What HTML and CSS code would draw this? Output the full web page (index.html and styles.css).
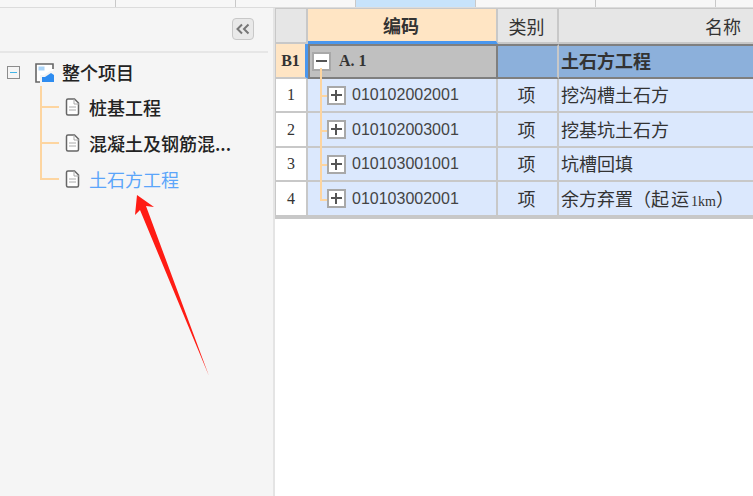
FILE: index.html
```html
<!DOCTYPE html>
<html lang="zh">
<head>
<meta charset="utf-8">
<title>土石方工程</title>
<link rel="stylesheet" href="styles.css">
</head>
<body>
<div class="tabs">
  <div class="tab"></div><div class="tab"></div>
  <div class="tab tab-active"></div>
  <div class="tab"></div><div class="tab"></div><div class="tab tab-last"></div>
</div>
<div class="main">
  <aside class="side">
    <div class="side-top"><button class="collapse" aria-label="collapse"><svg width="16" height="12" viewBox="0 0 16 12"><path d="M7 1.500 2.500 6 7 10.500M13.500 1.500 9 6l4.500 4.500" fill="none" stroke="#777" stroke-width="2"/></svg></button></div>
    <div class="tree">
      <div class="root">
        <span class="minus"></span>
        <svg class="root-icon" width="20" height="20" viewBox="0 0 20 20"><path d="M1 1h17v7l-3-.1L9 12H5v7H1z" fill="#fff"/><path d="M18 6V1H1v18h4" fill="none" stroke="#666" stroke-width="1.6"/><path d="M3.500 3.500h6v4h-6z" fill="#a9d3f7"/><path d="M7 19v-5h3l6-4 3 2v7z" fill="#2e8cf0"/></svg>
        <span class="root-label">整个项目</span>
      </div>
      <ul class="children">
        <li class="node"><svg class="doc" width="15" height="18" viewBox="0 0 15 18"><use href="#doc"/></svg><span class="node-label">桩基工程</span></li>
        <li class="node"><svg class="doc" width="15" height="18" viewBox="0 0 15 18"><use href="#doc"/></svg><span class="node-label">混凝土及钢筋混...</span></li>
        <li class="node"><svg class="doc" width="15" height="18" viewBox="0 0 15 18"><use href="#doc"/></svg><span class="node-label node-active">土石方工程</span></li>
      </ul>
    </div>
    <svg class="arrow" width="80" height="190" viewBox="0 0 80 190"><path d="M7 5 24 17l-8-1 63 170L10 20l-5 5z" fill="#ff1c14"/></svg>
  </aside>
  <section class="sheet">
    <div class="grid">
      <div class="c corner"></div>
      <div class="c head head-code">编码</div>
      <div class="c head head-type">类别</div>
      <div class="c head head-name">名称</div>

      <div class="c rowno rowno-b">B1</div>
      <div class="c code-b"><span class="box"><i class="h"></i></span><span class="a1">A. 1</span></div>
      <div class="c blue"></div>
      <div class="c blue blue-name">土石方工程</div>

      <div class="c rowno">1</div>
      <div class="c code"><span class="stem"></span><span class="box"><i class="h"></i><i class="v"></i></span><span class="num">010102002001</span></div>
      <div class="c type">项</div>
      <div class="c name">挖沟槽土石方</div>

      <div class="c rowno">2</div>
      <div class="c code"><span class="stem"></span><span class="box"><i class="h"></i><i class="v"></i></span><span class="num">010102003001</span></div>
      <div class="c type">项</div>
      <div class="c name">挖基坑土石方</div>

      <div class="c rowno">3</div>
      <div class="c code"><span class="stem"></span><span class="box"><i class="h"></i><i class="v"></i></span><span class="num">010103001001</span></div>
      <div class="c type">项</div>
      <div class="c name">坑槽回填</div>

      <div class="c rowno">4</div>
      <div class="c code code-last"><span class="stem"></span><span class="box"><i class="h"></i><i class="v"></i></span><span class="num">010103002001</span></div>
      <div class="c type">项</div>
      <div class="c name"><span>余方弃置（<span class="wide">起运</span><span class="km">1km</span>）</span></div>
    </div>
  </section>
</div>
<svg width="0" height="0" class="defs"><symbol id="doc" viewBox="0 0 15 18"><path d="M1.500 2.500q0-1.500 1.500-1.500h6.500l4 4v10.500q0 1.500-1.500 1.500H3q-1.500 0-1.500-1.500z" fill="#fff" stroke="#666" stroke-width="1.500"/><path d="M9 1v5h5M4 9h7M4 12h7" fill="none" stroke="#aaa"/></symbol></svg>
</body>
</html>
```
FILE: styles.css
```css
* { box-sizing: border-box; }
html, body { margin: 0; height: 100%; }
body {
  width: 753px; height: 496px; overflow: hidden; background: #fff;
  font-family: "Noto Sans CJK SC", "Liberation Sans", sans-serif;
  display: flex; flex-direction: column;
}
.defs { position: absolute; }
.tabs { height: 7px; display: flex; background: #f7f7f7; padding-left: 115px; flex: none; overflow: hidden; }
.tab { width: 120px; flex: none; border-left: 1px solid #c9c9c9; }
.tab-last { width: 38px; }
.tab-active { background: #c7e3fb; }
.main { flex: 1; display: flex; min-height: 0; border-top: 1px solid #dcdcdc; }
.side { width: 275px; flex: none; background: #f5f5f5; border-right: 2px solid #e4e4e4; position: relative; }
.side-top { height: 45px; border-bottom: 2px solid #e6e6e6; margin-right: 5px; padding: 10px 14px 0 0; display: flex; justify-content: flex-end; align-items: flex-start; }
.collapse { width: 22px; height: 22px; padding: 0; border: 1px solid #c8c8c8; border-radius: 4px; background: #e9e9e9; display: flex; align-items: center; justify-content: center; }
.tree { padding-top: 6px; color: #222; font-size: 18px; }
.root { display: flex; align-items: center; height: 27px; padding-left: 7px; }
.minus { width: 13px; height: 13px; border: 1px solid #8c8c8c; background: #f5f5f5; position: relative; margin-right: 15px; }
.minus::after { content: ""; position: absolute; left: 2px; right: 2px; top: 5px; height: 1px; background: #42b4e6; }
.root-icon { margin-right: 7px; }
.root-label, .node-label { line-height: 27px; font-weight: 500; white-space: nowrap; }
.children { list-style: none; margin: 0 0 0 40px; padding: 3px 0 0; position: relative; }
.children::before { content: ""; position: absolute; left: 0; top: 0; bottom: 17px; width: 2px; background: #fdd5a0; }
.node { height: 36px; display: flex; align-items: center; }
.node::before { content: ""; width: 19px; height: 2px; background: #fdd5a0; margin-right: 6px; }
.doc { margin-right: 9px; }
.node-active { color: #5ba5fa; font-weight: 400; }
.arrow { position: absolute; left: 130px; top: 182px; }

.sheet { flex: 1; min-width: 0; overflow: hidden; }
.grid {
  display: grid; grid-template-columns: 32px 190px 61px 194px;
  grid-template-rows: 36px 35px 34px 35px 34px 35px;
  border-bottom: 2px solid #c8c8c8; border-left: 1px solid #c8c8c8; width: 478px;
  font-size: 18px; color: #333; background: #fff;
}
.c { border-right: 2px solid #c8c8c8; border-bottom: 2px solid #c8c8c8; display: flex; align-items: center; white-space: nowrap; position: relative; min-width: 0; padding-bottom: 2px; }
.corner { background: #e6e6e6; border-top: 1px solid #c8c8c8; }
.head { background: #e6e6e6; justify-content: center; border-top: 1px solid #c8c8c8; padding-bottom: 0; }
.head-code { background: #ffe5c4; font-weight: 700; border-bottom: 3px solid #4a97ee; padding-right: 2px; }
.head-type { padding-right: 2px; }
.head-name { justify-content: flex-end; border-right: 0; padding-right: 12px; }
.rowno { background: #fff; justify-content: center; font-family: "Liberation Serif", serif; font-size: 16px; padding-bottom: 0; }
.rowno-b { background: #ffe5c4; font-weight: 700; border-right: 3px solid #4a97ee; }
.code-b { background: #c0c0c0; border: 2px solid #7f7f7f; padding: 0 0 1px 2px; }
.code-b::after { content: ""; position: absolute; left: 10px; top: 22px; bottom: -4px; width: 2px; background: #fdd5a0; }
.a1 { font-family: "Liberation Serif", serif; font-weight: 700; font-size: 16px; margin-left: 8px; }
.box { width: 19px; height: 19px; border: 2px solid #a8a8a8; background: #fff; position: relative; flex: none; }
.box .h { position: absolute; left: 2px; right: 2px; top: 6px; height: 2px; background: #555; }
.box .v { position: absolute; top: 2px; bottom: 2px; left: 6px; width: 2px; background: #555; }
.blue { background: #8cb0db; border-bottom-color: #7f7f7f; border-top: 2px solid #7f7f7f; padding-bottom: 4px; }
.blue-name { font-weight: 700; padding-left: 2px; border-right: 0; }
.code { background: #dbe8fd; padding: 0 0 0 19px; }
.stem { position: absolute; left: 12px; top: -2px; bottom: -2px; width: 2px; background: #fdd5a0; }
.stem::after { content: ""; position: absolute; left: 0; top: 50%; width: 7px; height: 2px; background: #fdd5a0; }
.code-last .stem { bottom: 50%; }
.code-last .stem::after { top: 100%; }
.code .box { margin-right: 6px; }
.num { font-family: "Liberation Sans", sans-serif; font-size: 16px; color: #444; }
.type { background: #dbe8fd; justify-content: center; padding-right: 2px; }
.name { background: #dbe8fd; padding-left: 2px; border-right: 0; }
.wide { letter-spacing: 2px; }
.km { font-family: "Liberation Serif", serif; font-size: 14px; }
```
